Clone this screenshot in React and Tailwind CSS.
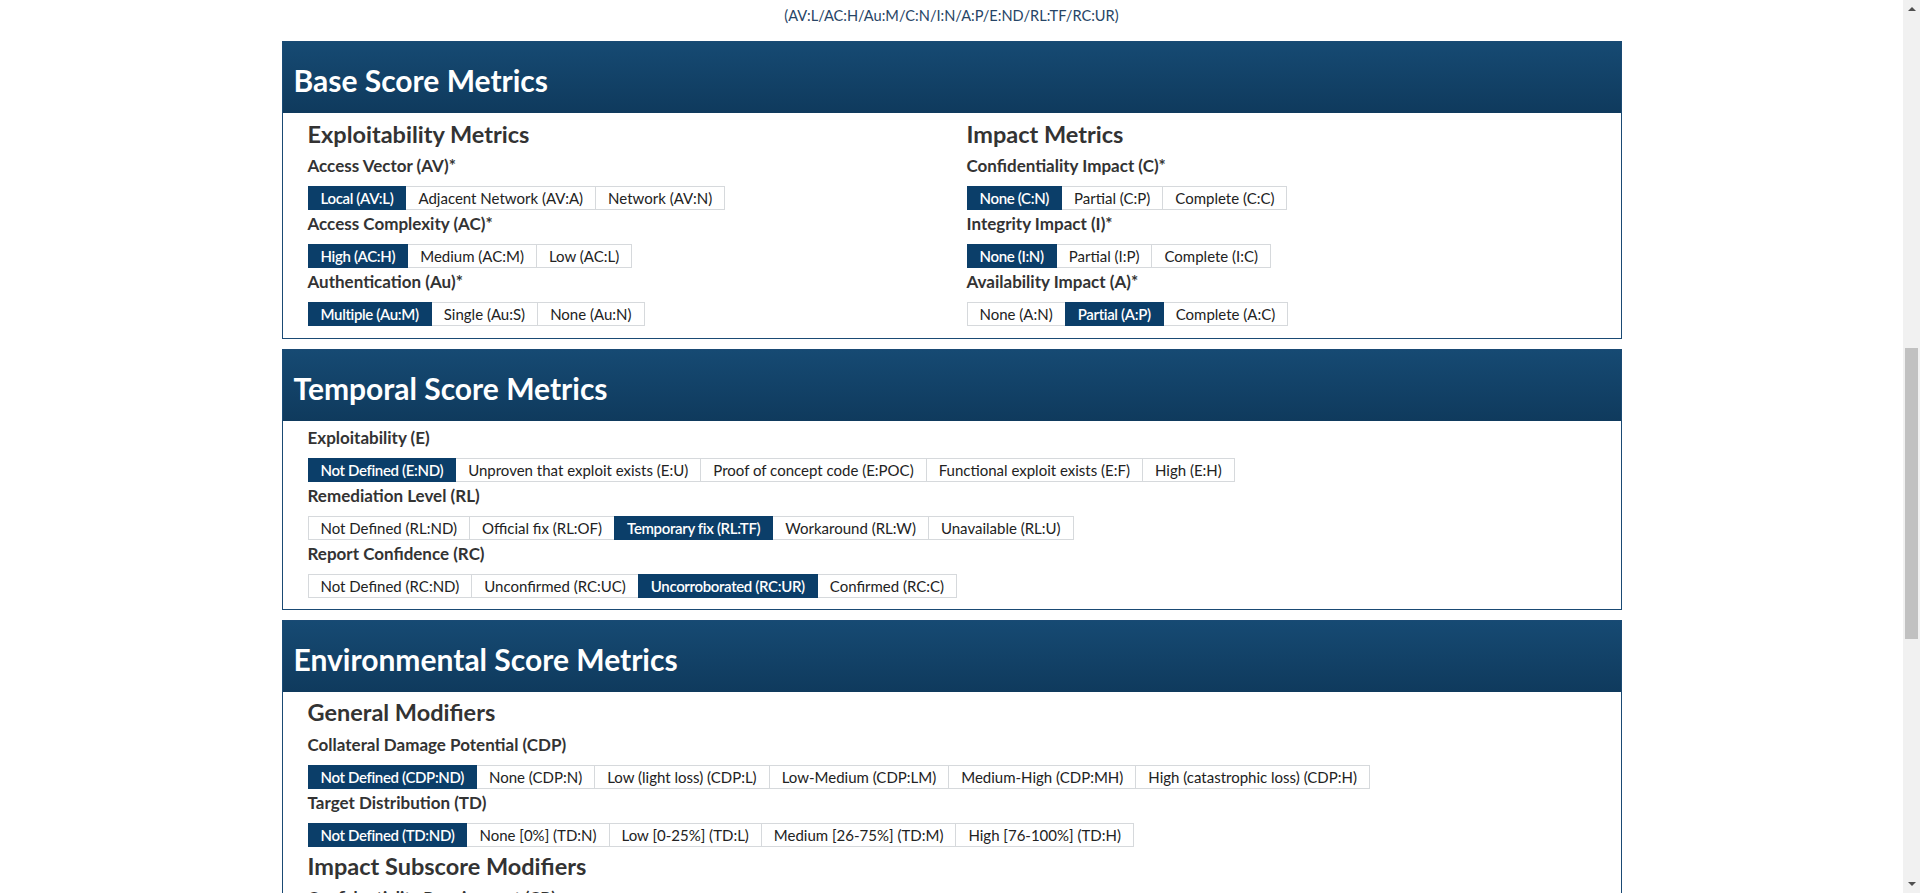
import React from 'react'

const FONT = { fontFamily: 'Lato, "Noto Sans", sans-serif' }

const BASE_LEFT = {
  title: 'Exploitability Metrics',
  groups: [
    { label: 'Access Vector (AV)*', options: ['Local (AV:L)', 'Adjacent Network (AV:A)', 'Network (AV:N)'], sel: 0 },
    { label: 'Access Complexity (AC)*', options: ['High (AC:H)', 'Medium (AC:M)', 'Low (AC:L)'], sel: 0 },
    { label: 'Authentication (Au)*', options: ['Multiple (Au:M)', 'Single (Au:S)', 'None (Au:N)'], sel: 0 },
  ],
}

const BASE_RIGHT = {
  title: 'Impact Metrics',
  groups: [
    { label: 'Confidentiality Impact (C)*', options: ['None (C:N)', 'Partial (C:P)', 'Complete (C:C)'], sel: 0 },
    { label: 'Integrity Impact (I)*', options: ['None (I:N)', 'Partial (I:P)', 'Complete (I:C)'], sel: 0 },
    { label: 'Availability Impact (A)*', options: ['None (A:N)', 'Partial (A:P)', 'Complete (A:C)'], sel: 1 },
  ],
}

const TEMPORAL = [
  { label: 'Exploitability (E)', options: ['Not Defined (E:ND)', 'Unproven that exploit exists (E:U)', 'Proof of concept code (E:POC)', 'Functional exploit exists (E:F)', 'High (E:H)'], sel: 0 },
  { label: 'Remediation Level (RL)', options: ['Not Defined (RL:ND)', 'Official fix (RL:OF)', 'Temporary fix (RL:TF)', 'Workaround (RL:W)', 'Unavailable (RL:U)'], sel: 2 },
  { label: 'Report Confidence (RC)', options: ['Not Defined (RC:ND)', 'Unconfirmed (RC:UC)', 'Uncorroborated (RC:UR)', 'Confirmed (RC:C)'], sel: 2 },
]

const GENERAL = [
  { label: 'Collateral Damage Potential (CDP)', options: ['Not Defined (CDP:ND)', 'None (CDP:N)', 'Low (light loss) (CDP:L)', 'Low-Medium (CDP:LM)', 'Medium-High (CDP:MH)', 'High (catastrophic loss) (CDP:H)'], sel: 0 },
  { label: 'Target Distribution (TD)', options: ['Not Defined (TD:ND)', 'None [0%] (TD:N)', 'Low [0-25%] (TD:L)', 'Medium [26-75%] (TD:M)', 'High [76-100%] (TD:H)'], sel: 0 },
]

const SUBSCORE = [
  { label: 'Confidentiality Requirement (CR)', options: ['Not Defined (CR:ND)', 'Low (CR:L)', 'Medium (CR:M)', 'High (CR:H)'], sel: 0 },
  { label: 'Integrity Requirement (IR)', options: ['Not Defined (IR:ND)', 'Low (IR:L)', 'Medium (IR:M)', 'High (IR:H)'], sel: 0 },
]

function Group({ label, options, sel }) {
  return (
    <div>
      <div className="mt-[4px] mb-[10px] text-[17px] leading-[20px] font-bold text-[#333333]">{label}</div>
      <div className="flex">
        {options.map((opt, i) => (
          <button
            key={opt}
            className={`h-[24px] px-[12px] text-[15px] leading-[22px] border whitespace-nowrap ${i > 0 ? '-ml-px' : ''} ${
              i === sel
                ? 'bg-[#0b3e69] border-[#0b3e69] text-white font-semibold tracking-[-0.35px] relative'
                : 'bg-white border-[#d6d9dc] text-[#222222]'
            }`}
          >
            {opt}
          </button>
        ))}
      </div>
    </div>
  )
}

function Heading({ children, className = '' }) {
  return <h3 className={`text-[23.5px] leading-[26px] font-bold text-[#333333] mb-[9px] ${className}`}>{children}</h3>
}

function Panel({ title, children, bodyClass = '' }) {
  return (
    <div className="border border-[#1a4a74] mb-[10px]">
      <div className="h-[71px] bg-gradient-to-b from-[#164a73] to-[#0f3a5d] px-[11px] pt-[21px]">
        <h2 className="text-[30px] leading-[34px] font-bold text-white">{title}</h2>
      </div>
      <div className={`px-[25px] ${bodyClass}`}>{children}</div>
    </div>
  )
}

export default function App() {
  return (
    <div className="flex h-screen overflow-hidden bg-white" style={FONT}>
      <div className="flex-1 overflow-hidden">
        <p className="pt-[6px] text-center text-[14.6px] leading-[20px] text-[#274566]">
          (AV:L/AC:H/Au:M/C:N/I:N/A:P/E:ND/RL:TF/RC:UR)
        </p>
        <div className="w-[1340px] mx-auto mt-[15px]">
          <Panel title="Base Score Metrics" bodyClass="pt-[8px] pb-[12px]">
            <div className="grid grid-cols-2 gap-[30px]">
              {[BASE_LEFT, BASE_RIGHT].map(col => (
                <div key={col.title}>
                  <Heading className="mb-[8px]">{col.title}</Heading>
                  {col.groups.map(g => <Group key={g.label} {...g} />)}
                </div>
              ))}
            </div>
          </Panel>

          <Panel title="Temporal Score Metrics" bodyClass="pt-[3px] pb-[11px]">
            {TEMPORAL.map(g => <Group key={g.label} {...g} />)}
          </Panel>

          <Panel title="Environmental Score Metrics" bodyClass="pt-[7px] pb-[11px]">
            <Heading className="mb-[10px]">General Modifiers</Heading>
            {GENERAL.map(g => <Group key={g.label} {...g} />)}
            <Heading className="mt-[6px]">Impact Subscore Modifiers</Heading>
            {SUBSCORE.map(g => <Group key={g.label} {...g} />)}
          </Panel>
        </div>
      </div>

      {/* fake scrollbar */}
      <div className="w-[17px] h-full bg-[#f1f1f1] flex flex-col items-center">
        <div className="h-[17px] flex items-center justify-center">
          <svg width="8" height="5" viewBox="0 0 8 5"><path d="M0 5 L4 1 L8 5 Z" fill="#505050" /></svg>
        </div>
        <div className="h-[331px]" />
        <div className="w-[13px] h-[291px] bg-[#c1c1c1]" />
        <div className="flex-1" />
        <div className="h-[17px] flex items-center justify-center">
          <svg width="8" height="5" viewBox="0 0 8 5"><path d="M0 0 L4 4 L8 0 Z" fill="#505050" /></svg>
        </div>
      </div>
    </div>
  )
}
